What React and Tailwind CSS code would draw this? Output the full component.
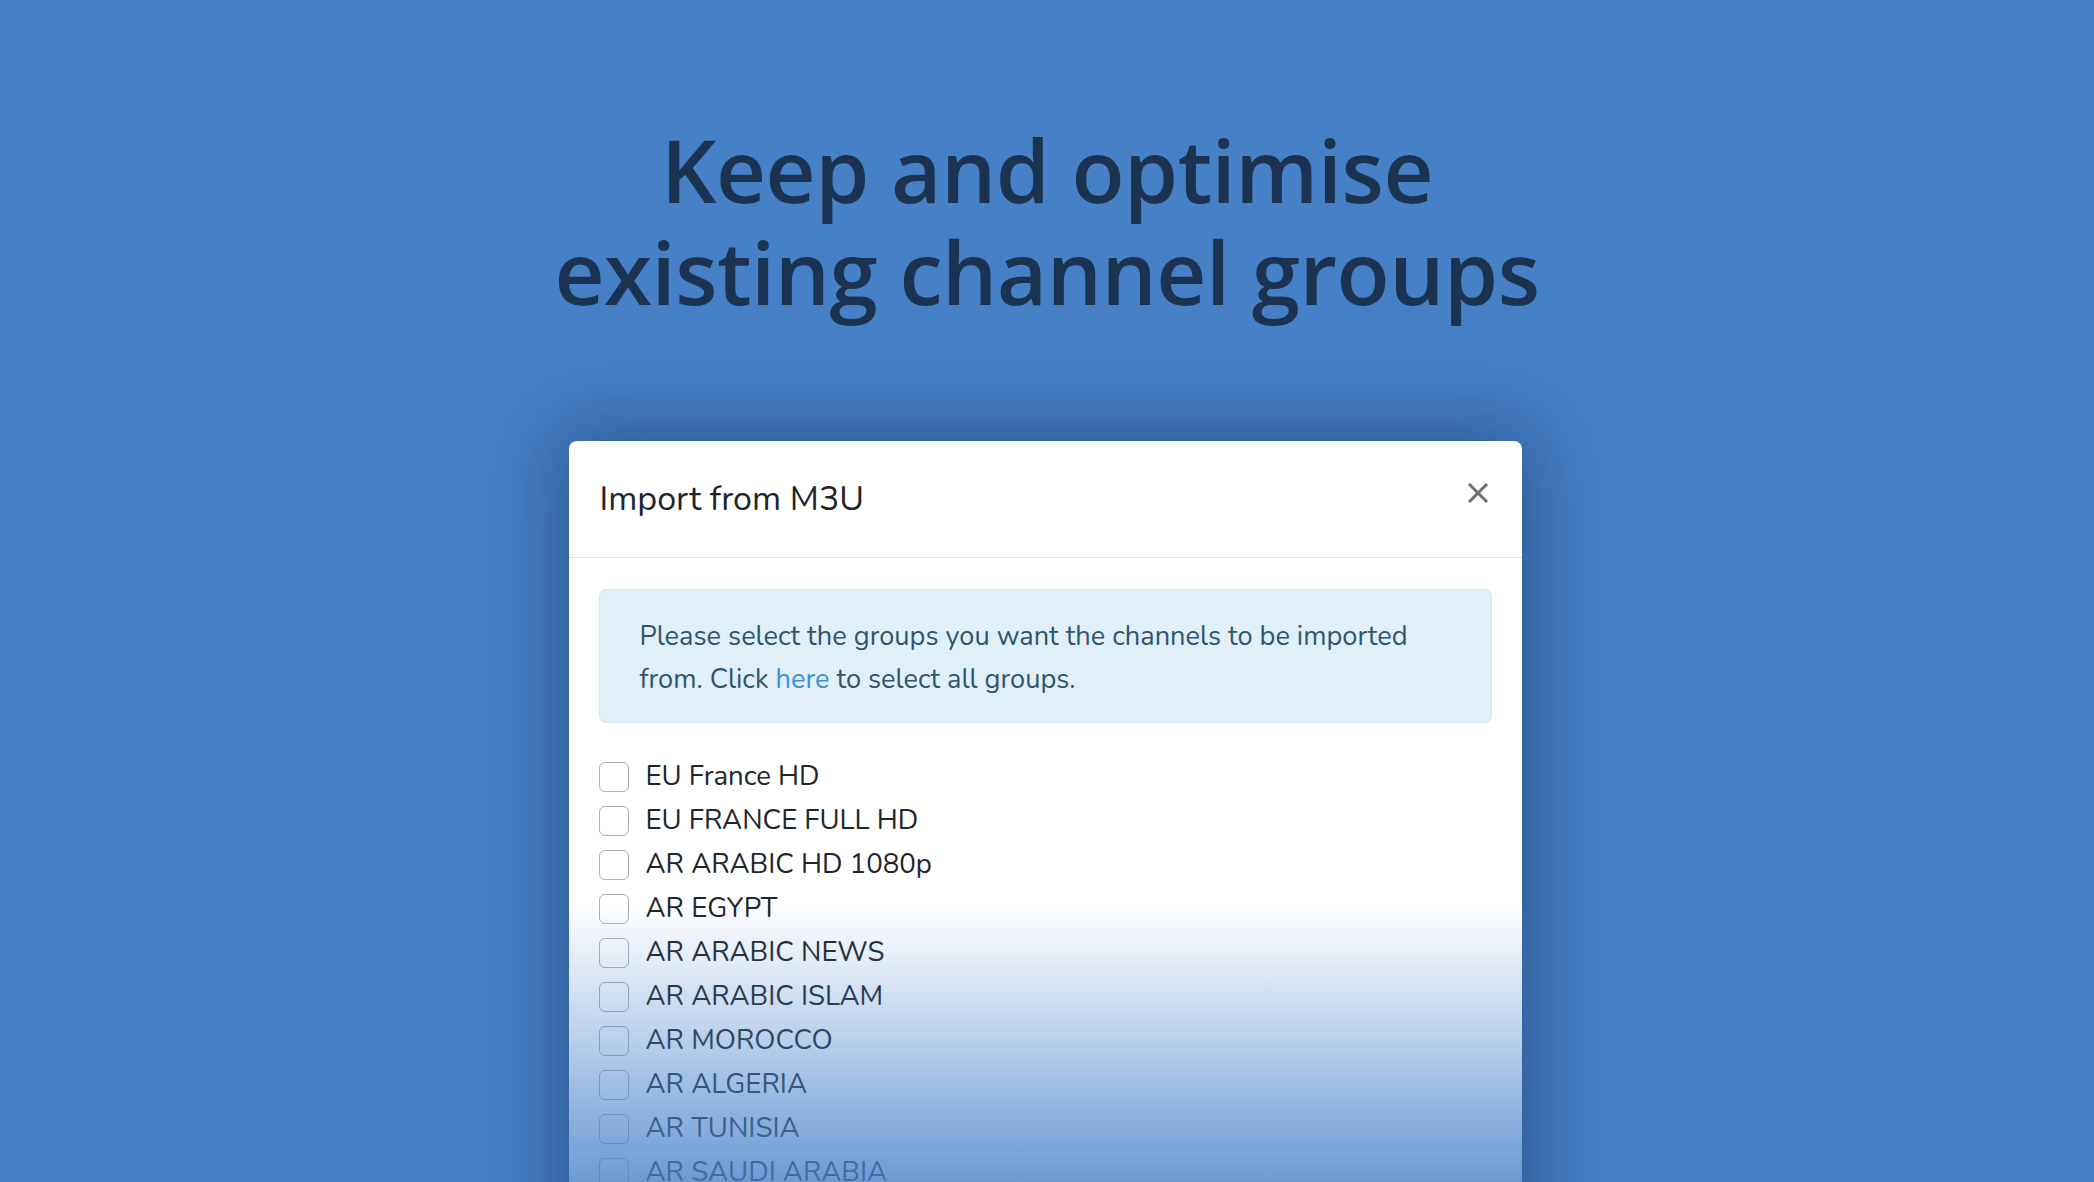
import React from "react";

const groups = [
  "EU France HD",
  "EU FRANCE FULL HD",
  "AR ARABIC HD 1080p",
  "AR EGYPT",
  "AR ARABIC NEWS",
  "AR ARABIC ISLAM",
  "AR MOROCCO",
  "AR ALGERIA",
  "AR TUNISIA",
  "AR SAUDI ARABIA",
  "AR KUWAIT",
  "AR QATAR",
];

export default function App() {
  return (
    <div className="h-[1182px] w-full overflow-hidden bg-[#4681c8] flex flex-col items-center">
      <h1
        className="pt-[118px] text-center text-[87px] leading-[102px] font-semibold text-[#1b3350] tracking-[-0.5px]"
        style={{ fontFamily: '"Open Sans", "Noto Sans", sans-serif' }}
      >
        Keep and optimise
        <br />
        existing channel groups
      </h1>

      <div
        className="relative mt-[119px] mr-[4px] w-[953px] shrink-0 rounded-[8px] bg-white shadow-[0_0_80px_10px_rgba(10,30,70,0.45)]"
        style={{ fontFamily: '"Nunito", Lato, "Noto Sans", sans-serif' }}
      >
        <div className="flex h-[117px] items-center justify-between border-b border-[#dee2e6] pl-[31px] pr-[34px]">
          <div className="text-[34px] text-[#212529]">Import from M3U</div>
          <svg width="20" height="20" viewBox="0 0 20 20" className="mt-[-12px]">
            <path d="M2 2 L18 18 M18 2 L2 18" stroke="#6e6e6e" strokeWidth="3" strokeLinecap="square" />
          </svg>
        </div>

        <div className="px-[30px] pt-[31px]">
          <div className="rounded-[7px] border border-[#d3e7f6] bg-[#e1eff9] pl-[40px] pr-[36px] pt-[25px] pb-[21px] text-[27.2px] leading-[43px] text-[#2f5670]">
            Please select the groups you want the channels to be imported from. Click{" "}
            <span className="text-[#3b8fdc]">here</span> to select all groups.
          </div>

          <div className="mt-[32px] flex flex-col pb-[40px]">
            {groups.map((g) => (
              <div key={g} className="flex h-[44px] items-center gap-[17px]">
                <div className="h-[30px] w-[30px] shrink-0 rounded-[6px] border-[1.5px] border-[#a9b1b9] bg-white" />
                <span className="text-[27.6px] text-[#212529]">{g}</span>
              </div>
            ))}
          </div>
        </div>

        <div className="pointer-events-none absolute inset-x-0 top-[462px] h-[279px] bg-[linear-gradient(to_bottom,rgba(70,129,200,0)_0%,rgba(70,129,200,0.3)_40%,rgba(70,129,200,0.6)_75%,rgba(70,129,200,0.8)_100%)]" />
      </div>
    </div>
  );
}
